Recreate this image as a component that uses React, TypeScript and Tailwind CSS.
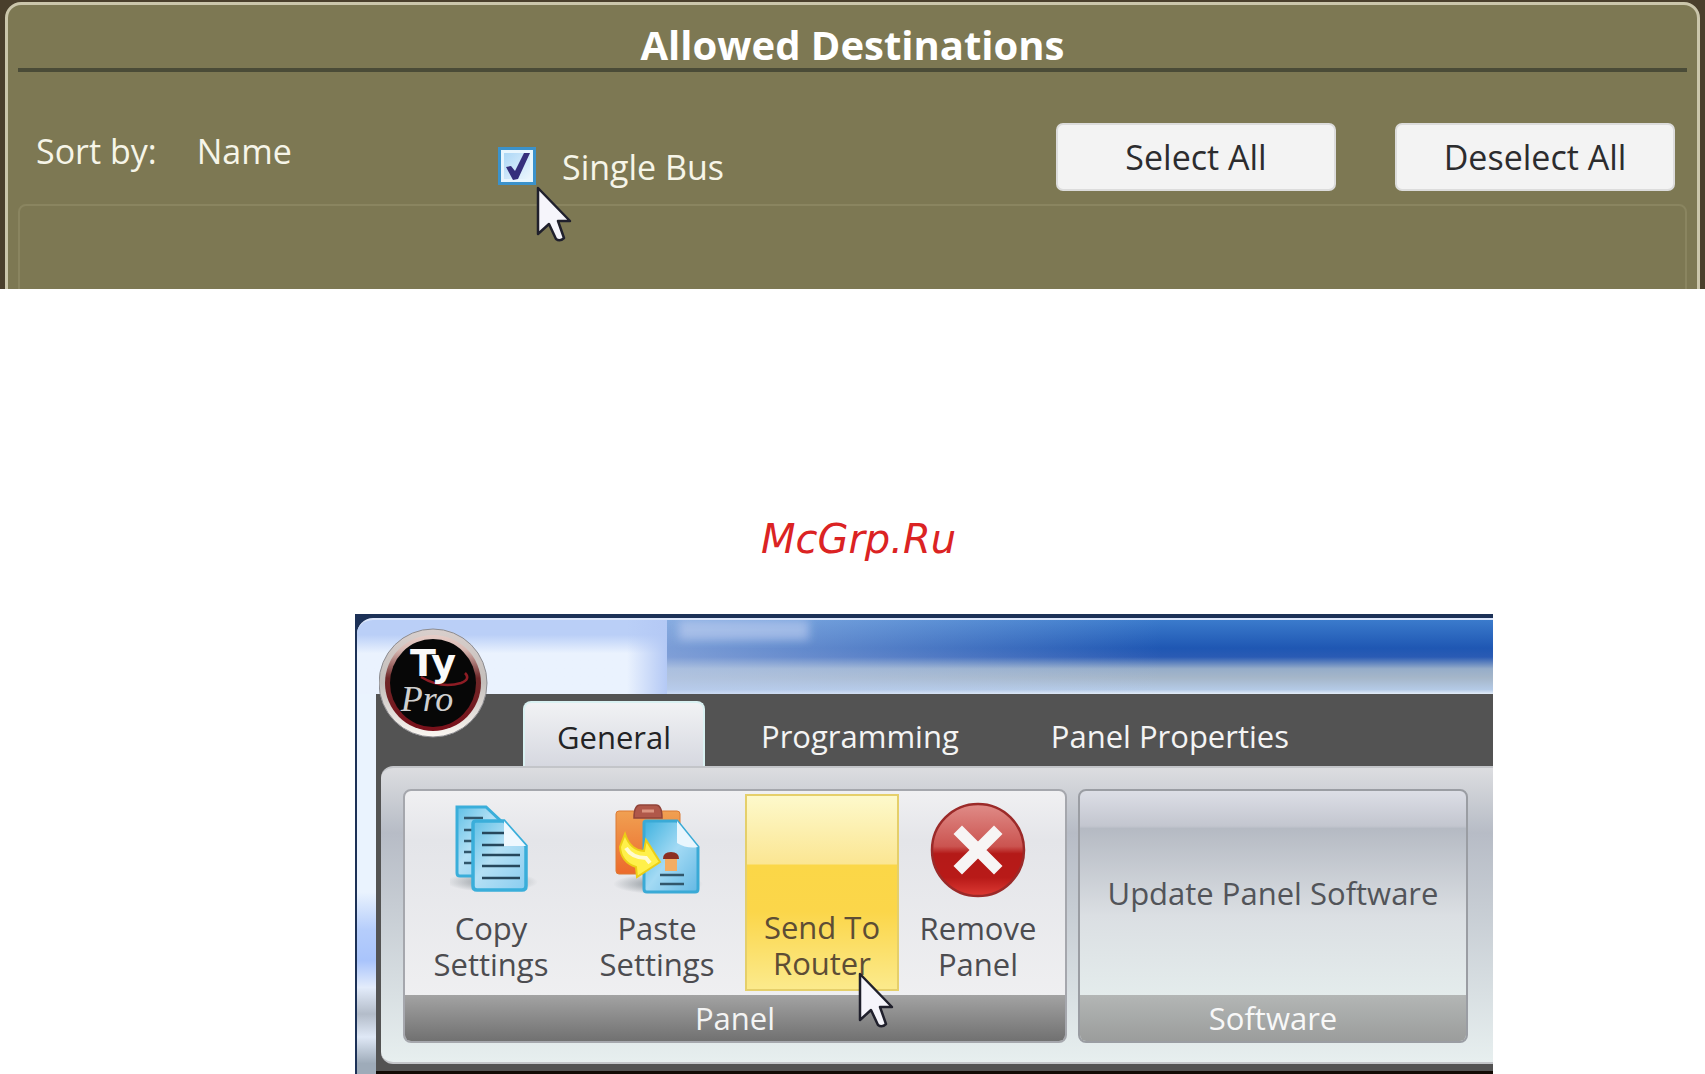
import React, { useState } from 'react';
import clsx from 'clsx';

const TABS = ['General', 'Programming', 'Panel Properties'];

const Pointer: React.FC<{ className?: string }> = ({ className }) => (
  <svg viewBox="0 0 36 58" className={clsx('pointer-events-none absolute z-10 h-[58px] w-[36px]', className)}>
    <path
      d="M2 3 L2 49 L13 39 L20 54 Q24 57 28 53 L22 36 L34 36 Z"
      fill="#f6f5fb"
      stroke="#20202c"
      strokeWidth="2.5"
      strokeLinejoin="round"
    />
  </svg>
);

const CopyIcon: React.FC = () => (
  <svg viewBox="0 0 90 92" className="ml-2 h-[92px] w-[90px]">
    <defs>
      <linearGradient id="page" x1="0" y1="0" x2="1" y2="1">
        <stop offset="0" stopColor="#5fc0e6" />
        <stop offset="0.45" stopColor="#b4e0f5" />
        <stop offset="1" stopColor="#8acdf0" />
      </linearGradient>
      <radialGradient id="soft">
        <stop offset="0" stopColor="#6f7a80" stopOpacity="0.8" />
        <stop offset="1" stopColor="#6f7a80" stopOpacity="0" />
      </radialGradient>
    </defs>
    <ellipse cx="42" cy="78" rx="46" ry="10" fill="url(#soft)" />
    <path d="M7 3 H36 L54 20 V72 H10 Q7 72 7 69 Z" fill="url(#page)" stroke="#3aaeda" strokeWidth="3" />
    <path d="M14 14h19M14 26h10M14 37h10M14 48h10M14 59h10" stroke="#31566b" strokeWidth="2.5" />
    <path d="M23 20 Q23 17 26 17 H54 L76 42 V82 Q76 86 72 86 H27 Q23 86 23 82 Z" fill="url(#page)" stroke="#3aaeda" strokeWidth="3.5" />
    <path d="M54 17 L76 42 H54 Z" fill="#eff8fe" />
    <path d="M32 29h22M32 41h22M32 51h38M32 62h38M32 74h38" stroke="#26475c" strokeWidth="2.5" />
  </svg>
);

const PasteIcon: React.FC = () => (
  <svg viewBox="0 0 90 92" className="ml-1 h-[92px] w-[90px]">
    <defs>
      <linearGradient id="board" x1="0" y1="0" x2="0" y2="1">
        <stop offset="0" stopColor="#f0a052" />
        <stop offset="1" stopColor="#ec6a2b" />
      </linearGradient>
      <linearGradient id="sheet" x1="0" y1="0" x2="1" y2="1">
        <stop offset="0" stopColor="#3fb2df" />
        <stop offset="0.5" stopColor="#a3daf4" />
        <stop offset="1" stopColor="#64b8e4" />
      </linearGradient>
    </defs>
    <ellipse cx="44" cy="80" rx="45" ry="10" fill="url(#soft)" />
    <rect x="2" y="7" width="64" height="63" rx="3" fill="url(#board)" stroke="#dc7a34" />
    <path d="M20 14 Q20 1 26 1 H42 Q48 1 48 14 Z" fill="#b0584a" stroke="#91443a" strokeWidth="1.5" />
    <path d="M28 7h12" stroke="#dc9480" strokeWidth="3" />
    <path d="M30 19 Q30 17 32 17 H63 L84 43 V85 Q84 88 81 88 H33 Q30 88 30 85 Z" fill="url(#sheet)" stroke="#3aaad6" strokeWidth="3" />
    <path d="M63 17 L84 43 Q73 45 63 39 Z" fill="#e9f6fd" />
    <rect x="51" y="54" width="12" height="13" fill="#f4ad62" />
    <path d="M49 55 Q49 48 57 48 Q65 48 65 55 Z" fill="#8c2f22" />
    <path d="M46 71h24M46 80h24" stroke="#31566b" strokeWidth="2.5" />
    <path d="M11 30 Q16 46 30 47 L32 36 L46 58 L23 73 L22 63 Q7 58 6 43 Z" fill="#fff04a" stroke="#ecce16" strokeWidth="2" />
    <path d="M12 44 Q18 54 32 54 L36 59" stroke="#fffbd0" strokeWidth="4" fill="none" />
  </svg>
);

const RemoveIcon: React.FC = () => (
  <svg viewBox="0 0 96 96" className="h-[96px] w-[96px]">
    <defs>
      <linearGradient id="red" x1="0" y1="0" x2="0" y2="1">
        <stop offset="0" stopColor="#e08c88" />
        <stop offset="0.46" stopColor="#cb5450" />
        <stop offset="0.54" stopColor="#b41a18" />
        <stop offset="0.8" stopColor="#b81a18" />
        <stop offset="1" stopColor="#dd3a34" />
      </linearGradient>
    </defs>
    <circle cx="48" cy="48" r="46" fill="url(#red)" stroke="#9b2a29" strokeWidth="2.5" />
    <path d="M32 32 L64 64 M64 32 L32 64" stroke="#f7f5f5" strokeWidth="12" strokeLinecap="square" />
  </svg>
);

const Logo: React.FC = () => (
  <svg viewBox="0 0 110 112" className="absolute top-2 left-[22px] h-[112px] w-[110px]">
    <defs>
      <linearGradient id="ring" x1="0" y1="0" x2="0" y2="1">
        <stop offset="0" stopColor="#d9cfcc" />
        <stop offset="0.5" stopColor="#c3bebb" />
        <stop offset="1" stopColor="#fbf7f2" />
      </linearGradient>
      <linearGradient id="rim" x1="0" y1="0" x2="0" y2="1">
        <stop offset="0" stopColor="#e6cdc7" />
        <stop offset="0.15" stopColor="#d9bab4" />
        <stop offset="0.45" stopColor="#6e2728" />
        <stop offset="1" stopColor="#79101a" />
      </linearGradient>
    </defs>
    <circle cx="54" cy="55" r="54" fill="url(#ring)" stroke="#8b8b90" strokeWidth="1" />
    <circle cx="54" cy="55" r="48" fill="url(#rim)" />
    <ellipse cx="54" cy="55" rx="43" ry="44" fill="#070707" />
    <path d="M42 49 Q62 61 82 55 Q92 51 86 45" fill="none" stroke="#8e1c24" strokeWidth="2.5" />
    <text x="54" y="48" textAnchor="middle" fontFamily="DejaVu Sans, sans-serif" fontWeight="bold" fontSize="38" fill="#fafafa">Ty</text>
    <text x="48" y="83" textAnchor="middle" fontFamily="Liberation Serif, serif" fontStyle="italic" fontSize="36" fill="#cfcfcf">Pro</text>
  </svg>
);

const RibbonButton: React.FC<{ icon: React.ReactNode; lines: string[]; className?: string }> = ({ icon, lines, className }) => (
  <button type="button" className={clsx('flex flex-col items-center pt-[11px] text-[31px] leading-9 text-[#4c4c50]', className)}>
    <span className="flex h-24 items-center">{icon}</span>
    <span className="mt-3 block">
      {lines[0]}
      <br />
      {lines[1]}
    </span>
  </button>
);

const Destinations: React.FC = () => {
  const [single, setSingle] = useState(true);
  const button =
    'h-[68px] w-[280px] rounded-[7px] border-2 border-[#dcdcdc] bg-[#f3f3f3] text-[34px] leading-10 text-[#2c2c2e]';

  return (
    <section className="h-[289px] overflow-hidden bg-[#4a3f2c] px-[5px] pt-[2px]">
      <div className="flex h-[300px] flex-col rounded-t-2xl border-[3px] border-[#cbc6ab] bg-[#7d7853] px-[10px] pt-[15px]">
        <h1 className="h-[52px] border-b-4 border-[#4a4b37] text-center text-[40px] leading-[50px] font-bold text-white">
          Allowed Destinations
        </h1>
        <div className="mt-[51px] flex items-start justify-between pr-3 pl-[18px] text-[34px] leading-10 text-[#f6f5e8]">
          <div className="flex">
            <div className="flex w-[462px] gap-10 pt-2">
              <span>Sort by:</span>
              <span>Name</span>
            </div>
            <label className="relative mt-6 flex gap-[26px]">
              <input
                type="checkbox"
                checked={single}
                onChange={(e) => setSingle(e.target.checked)}
                className="h-[38px] w-[38px] appearance-none border-[3px] border-[#3b92cb] bg-linear-to-br from-[#a5d4f5] to-[#f2f9fe] outline-3 -outline-offset-6 outline-[#e8f6fe]"
              />
              {single && (
                <svg viewBox="0 0 38 38" className="pointer-events-none absolute top-0 left-0 h-[38px] w-[38px]">
                  <path d="M8 20 L13 19 L17 24 L26 6 L32 6 L20 32 L15 33 Z" fill="#352f7c" />
                </svg>
              )}
              <span>Single Bus</span>
              <Pointer className="top-[38px] left-[38px]" />
            </label>
          </div>
          <div className="flex gap-[59px]">
            <button type="button" className={button}>Select All</button>
            <button type="button" className={button}>Deselect All</button>
          </div>
        </div>
        <div className="mt-[13px] grow rounded-t-lg border-2 border-[#8a8560]" />
      </div>
    </section>
  );
};

const Ribbon: React.FC = () => {
  const [tab, setTab] = useState('General');

  return (
    <section className="overflow-hidden bg-[#1c3157]">
      <div className="relative mt-1 ml-[2px] overflow-hidden rounded-tl-2xl border-t-2 border-[#dce6fb] bg-[#eaf2fe]">
        {/* title bar, with the window behind showing through the glass */}
        <div className="flex h-[74px] bg-linear-to-b from-[#bacff7] from-20% to-[#eaf2fe] to-45%">
          <div className="ml-[270px] w-10 bg-linear-to-r from-transparent to-[#b4c9f5]" />
          <div className="relative grow bg-[linear-gradient(#3b7bcc,#1f57b3_38%,#2a5bb4_50%,#96adc9_66%,#a5b6c9_78%,#b4cae6_94%,#e4edf8)]">
            <div className="h-full w-[60%] bg-linear-to-r from-[#b9ccee]/60 to-transparent" />
            <div className="absolute top-0 left-3 h-5 w-[130px] bg-[#c3d2f1]/60 blur-[5px]" />
          </div>
        </div>
        <div className="flex">
          <div className="w-[19px] bg-[linear-gradient(#eaf3fe_52%,#b5cdfb_62%,#a9c4fb_70%,#e3ecfb_77%,#b3bcc9_84%,#dfe8f6_90%,#9eabb9_97%)]" />
          <div className="grow bg-[#535353]">
            <nav role="tablist" className="flex h-[72px] items-end pl-[147px] text-[31px] leading-9 text-[#f4f4f4]">
              {TABS.map((name) => (
                <button
                  key={name}
                  type="button"
                  role="tab"
                  aria-selected={tab === name}
                  onClick={() => setTab(name)}
                  className={clsx(
                    'h-[65px] rounded-t-lg pt-1',
                    tab === name
                      ? 'mr-[30px] w-[182px] border-2 border-b-0 border-[#d9f1f2] bg-linear-to-b from-[#f1f2f4] to-[#d6d8e0] text-[#232325]'
                      : 'mr-10 px-[26px]',
                  )}
                >
                  {name}
                </button>
              ))}
            </nav>
            <div className="ml-[5px] flex gap-[11px] rounded-l-xl border-y-2 border-[#c3c5c9] bg-linear-to-b from-[#dcdde0] via-[#b7bcc6] via-22% to-[#e7efef] px-[22px] pt-[21px] pb-[19px]">
              <div className="w-[664px] overflow-hidden rounded-lg border-2 border-[#a5a7ad] bg-linear-to-b from-[#f0f0f2] via-[#e4e5e9] via-20% to-[#f2f2f3]">
                <div className="flex h-[204px] px-[3px]">
                  <RibbonButton icon={<CopyIcon />} lines={['Copy', 'Settings']} className="w-[166px]" />
                  <RibbonButton icon={<PasteIcon />} lines={['Paste', 'Settings']} className="w-[166px]" />
                  <button
                    type="button"
                    className="mt-[3px] mr-1 mb-1 ml-[5px] flex w-[154px] flex-col items-center justify-end border-2 border-[#e5cf6a] bg-[linear-gradient(#fdf9cb,#fbe693_35%,#fbd747_36%,#fbd64a_60%,#fbea8c)] pb-2 text-[31px] leading-9 text-[#5d4d35]"
                  >
                    Send To
                    <br />
                    Router
                  </button>
                  <RibbonButton icon={<RemoveIcon />} lines={['Remove', 'Panel']} className="w-[150px]" />
                </div>
                <div className="h-[46px] bg-linear-to-b from-[#a3a3a3] to-[#717171] text-center text-[31px] leading-[46px] text-[#f4f4f4]">Panel</div>
              </div>
              <div className="w-[390px] overflow-hidden rounded-lg border-2 border-[#9a9da3] bg-[linear-gradient(#dcdee6,#c3c6cf_14%,#b5bac3_15%,#dbdfe3_50%,#e4ecec_82%)]">
                <button type="button" className="block h-[204px] w-full text-[31px] leading-9 text-[#525459]">Update Panel Software</button>
                <div className="h-[46px] bg-linear-to-b from-[#b3b6b5] to-[#9b9d9c] text-center text-[31px] leading-[46px] text-[#f8f8f8]">Software</div>
              </div>
            </div>
            <div className="mt-[7px] h-1 bg-[#120b05]" />
          </div>
        </div>
        <Logo />
      </div>
    </section>
  );
};

const App: React.FC = () => (
  <main className="bg-white font-['Open_Sans','Noto_Sans',sans-serif]">
    <Destinations />
    <p className="pt-[226px] pb-[51px] pl-3 text-center font-['DejaVu_Sans',sans-serif] text-[40px] leading-12 text-[#db2323] italic">
      McGrp.Ru
    </p>
    <div className="relative pr-[212px] pl-[355px]">
      <Ribbon />
      <Pointer className="top-[357px] left-[858px]" />
    </div>
  </main>
);

export default App;
